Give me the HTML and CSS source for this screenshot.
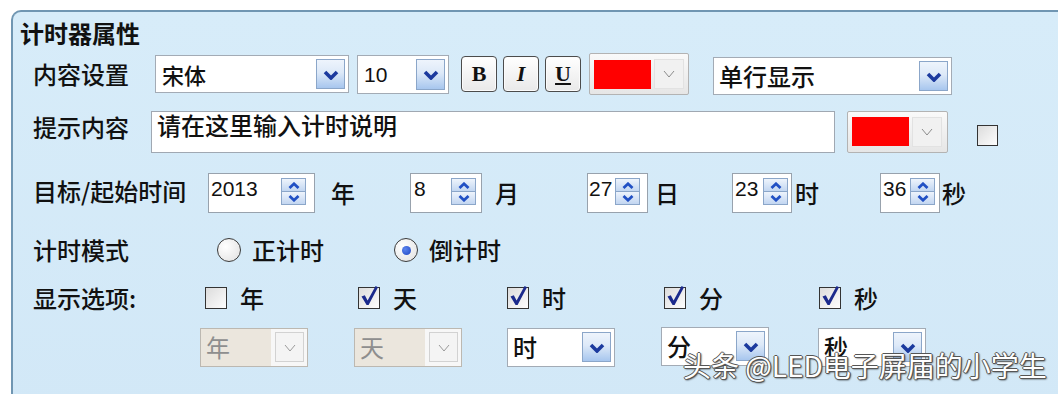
FILE: index.html
```html
<!DOCTYPE html>
<html lang="zh-CN">
<head>
<meta charset="utf-8">
<title>计时器属性</title>
<link rel="stylesheet" href="styles.css">
</head>
<body>
<div class="group">
  <div class="title">计时器属性</div>

  <div class="row r1">
    <span class="label w-r1">内容设置</span>
    <div class="combo c-font"><span class="val">宋体</span><span class="dd"><svg width="16" height="10" viewBox="0 0 16 10"><polyline points="2,2 8,8 14,2" fill="none" stroke="#1c3a9e" stroke-width="3.6"/></svg></span></div>
    <div class="combo c-size"><span class="val num">10</span><span class="dd"><svg width="16" height="10" viewBox="0 0 16 10"><polyline points="2,2 8,8 14,2" fill="none" stroke="#1c3a9e" stroke-width="3.6"/></svg></span></div>
    <span class="fmt f-b">B</span>
    <span class="fmt f-i">I</span>
    <span class="fmt f-u">U</span>
    <div class="color c1"><span class="swatch"></span><span class="cbtn"><svg width="12" height="8" viewBox="0 0 12 8"><polyline points="1,1 6,7 11,1" fill="none" stroke="#8c8c8c" stroke-width="1"/></svg></span></div>
    <div class="combo c-mode"><span class="val">单行显示</span><span class="dd"><svg width="16" height="10" viewBox="0 0 16 10"><polyline points="2,2 8,8 14,2" fill="none" stroke="#1c3a9e" stroke-width="3.6"/></svg></span></div>
  </div>

  <div class="row r2">
    <span class="label w-r2 up">提示内容</span>
    <div class="input">请在这里输入计时说明</div>
    <div class="color c2"><span class="swatch"></span><span class="cbtn"><svg width="12" height="8" viewBox="0 0 12 8"><polyline points="1,1 6,7 11,1" fill="none" stroke="#8c8c8c" stroke-width="1"/></svg></span></div>
    <span class="cb cb-r2"></span>
  </div>

  <div class="row r3">
    <span class="label w-r3 up2">目标/起始时间</span>
    <div class="spin s-year"><span class="v">2013</span><span class="sb"><span><svg width="12" height="7" viewBox="0 0 12 7"><polyline points="1.5,6 6,1.8 10.5,6" fill="none" stroke="#2150c4" stroke-width="2.8"/></svg></span><span><svg width="12" height="7" viewBox="0 0 12 7"><polyline points="1.5,1 6,5.2 10.5,1" fill="none" stroke="#2150c4" stroke-width="2.8"/></svg></span></span></div>
    <span class="unit u-year">年</span>
    <div class="spin s-mon"><span class="v">8</span><span class="sb"><span><svg width="12" height="7" viewBox="0 0 12 7"><polyline points="1.5,6 6,1.8 10.5,6" fill="none" stroke="#2150c4" stroke-width="2.8"/></svg></span><span><svg width="12" height="7" viewBox="0 0 12 7"><polyline points="1.5,1 6,5.2 10.5,1" fill="none" stroke="#2150c4" stroke-width="2.8"/></svg></span></span></div>
    <span class="unit u-mon">月</span>
    <div class="spin s-day"><span class="v">27</span><span class="sb"><span><svg width="12" height="7" viewBox="0 0 12 7"><polyline points="1.5,6 6,1.8 10.5,6" fill="none" stroke="#2150c4" stroke-width="2.8"/></svg></span><span><svg width="12" height="7" viewBox="0 0 12 7"><polyline points="1.5,1 6,5.2 10.5,1" fill="none" stroke="#2150c4" stroke-width="2.8"/></svg></span></span></div>
    <span class="unit u-day">日</span>
    <div class="spin s-hour"><span class="v">23</span><span class="sb"><span><svg width="12" height="7" viewBox="0 0 12 7"><polyline points="1.5,6 6,1.8 10.5,6" fill="none" stroke="#2150c4" stroke-width="2.8"/></svg></span><span><svg width="12" height="7" viewBox="0 0 12 7"><polyline points="1.5,1 6,5.2 10.5,1" fill="none" stroke="#2150c4" stroke-width="2.8"/></svg></span></span></div>
    <span class="unit u-hour">时</span>
    <div class="spin s-sec"><span class="v">36</span><span class="sb"><span><svg width="12" height="7" viewBox="0 0 12 7"><polyline points="1.5,6 6,1.8 10.5,6" fill="none" stroke="#2150c4" stroke-width="2.8"/></svg></span><span><svg width="12" height="7" viewBox="0 0 12 7"><polyline points="1.5,1 6,5.2 10.5,1" fill="none" stroke="#2150c4" stroke-width="2.8"/></svg></span></span></div>
    <span class="unit u-sec">秒</span>
  </div>

  <div class="row r4">
    <span class="label w-r4">计时模式</span>
    <span class="opt o1"><span class="radio"></span><span class="otext">正计时</span></span>
    <span class="opt o2"><span class="radio on"></span><span class="otext">倒计时</span></span>
  </div>

  <div class="row r5">
    <span class="label w-r5">显示选项:</span>
    <div class="cols">
      <span class="chk k1"><span class="cb"></span><span class="ktext">年</span></span>
      <span class="chk k2"><span class="cb on"><svg width="22" height="22" viewBox="0 0 22 22"><path d="M3.5 10.5 L6.8 9.3 L9.6 14.6 L17.6 0 L20 1.2 L10.6 19 L8.6 19 Z" fill="#1b2a8c"/></svg></span><span class="ktext">天</span></span>
      <span class="chk k3"><span class="cb on"><svg width="22" height="22" viewBox="0 0 22 22"><path d="M3.5 10.5 L6.8 9.3 L9.6 14.6 L17.6 0 L20 1.2 L10.6 19 L8.6 19 Z" fill="#1b2a8c"/></svg></span><span class="ktext">时</span></span>
      <span class="chk k4"><span class="cb on"><svg width="22" height="22" viewBox="0 0 22 22"><path d="M3.5 10.5 L6.8 9.3 L9.6 14.6 L17.6 0 L20 1.2 L10.6 19 L8.6 19 Z" fill="#1b2a8c"/></svg></span><span class="ktext">分</span></span>
      <span class="chk k5"><span class="cb on"><svg width="22" height="22" viewBox="0 0 22 22"><path d="M3.5 10.5 L6.8 9.3 L9.6 14.6 L17.6 0 L20 1.2 L10.6 19 L8.6 19 Z" fill="#1b2a8c"/></svg></span><span class="ktext">秒</span></span>
    </div>
  </div>

  <div class="row r6">
    <div class="cols">
      <div class="combo small dis q1"><span class="val">年</span><span class="dd"><svg width="12" height="8" viewBox="0 0 12 8"><polyline points="1,1 6,7 11,1" fill="none" stroke="#9a9a9a" stroke-width="1"/></svg></span></div>
      <div class="combo small dis q2"><span class="val">天</span><span class="dd"><svg width="12" height="8" viewBox="0 0 12 8"><polyline points="1,1 6,7 11,1" fill="none" stroke="#9a9a9a" stroke-width="1"/></svg></span></div>
      <div class="combo small q3"><span class="val">时</span><span class="dd"><svg width="16" height="10" viewBox="0 0 16 10"><polyline points="2,2 8,8 14,2" fill="none" stroke="#1c3a9e" stroke-width="3.6"/></svg></span></div>
      <div class="combo small q4"><span class="val">分</span><span class="dd"><svg width="16" height="10" viewBox="0 0 16 10"><polyline points="2,2 8,8 14,2" fill="none" stroke="#1c3a9e" stroke-width="3.6"/></svg></span></div>
      <div class="combo small q5"><span class="val">秒</span><span class="dd"><svg width="16" height="10" viewBox="0 0 16 10"><polyline points="2,2 8,8 14,2" fill="none" stroke="#1c3a9e" stroke-width="3.6"/></svg></span></div>
    </div>
  </div>
</div>
<div class="wm">头条 @LED电子屏届的小学生</div>
</body>
</html>
```

FILE: styles.css
```css
html, body {
  margin: 0;
  padding: 0;
}
body {
  width: 1058px;
  height: 394px;
  overflow: hidden;
  position: relative;
  background: #ffffff;
  font-family: "Noto Sans CJK SC", "Liberation Sans", sans-serif;
  font-weight: 500;
  color: #111;
}

.group {
  margin: 10px 0 0 11px;
  height: 400px;
  box-sizing: border-box;
  border: 2px solid #7096b2;
  border-right: 0;
  border-bottom: 0;
  border-radius: 10px 0 0 0;
  background: linear-gradient(#d7ecf9, #d2e8f7);
}

.title {
  height: 35px;
  box-sizing: border-box;
  padding: 7px 0 0 7px;
  font-size: 24px;
  line-height: 28px;
  font-weight: 700;
  color: #111;
}

.row {
  display: flex;
  align-items: center;
  padding-left: 20px;
}
.r1 { margin-top: 6px; height: 42px; }
.r2 { margin-top: 15px; height: 43px; }
.r3 { margin-top: 20px; height: 40px; }
.r4 { margin-top: 22px; height: 30px; }
.r5 { margin-top: 20px; height: 26px; }
.r6 { margin-top: 16px; height: 40px; padding-left: 187px; }

.label {
  flex: none;
  font-size: 24px;
  line-height: 24px;
  white-space: nowrap;
}
.label.up { margin-bottom: 10px; }
.label.up2 { margin-bottom: 4px; }
.w-r1 { width: 122px; }
.w-r2 { width: 118px; }
.w-r3 { width: 175px; }
.w-r4 { width: 184px; }
.w-r5 { width: 167px; }

/* combo boxes */
.combo {
  flex: none;
  display: flex;
  align-items: center;
  justify-content: space-between;
  box-sizing: border-box;
  background: #fff;
  border: 1px solid #a3abb5;
  padding: 0 3px 0 6px;
  font-size: 22px;
  line-height: 24px;
}
.combo .val { white-space: nowrap; }
.combo .num {
  font-family: "Liberation Sans", sans-serif;
  font-weight: 400;
  font-size: 21px;
  line-height: 21px;
}
.dd {
  flex: none;
  width: 29px;
  height: 30px;
  box-sizing: border-box;
  border: 1px solid #8ba6c9;
  background: linear-gradient(#eef4fc 0%, #dde9f8 45%, #a7c6ee 100%);
  display: flex;
  align-items: center;
  justify-content: center;
}
.dd svg { margin-top: 2px; }

.c-font { width: 194px; height: 38px; }
.c-size { width: 92px; height: 39px; margin-left: 8px; }
.c-size .dd { height: 31px; }
.c-mode { width: 239px; height: 38px; margin-left: 24px; margin-top: 4px; font-size: 24px; padding-left: 5px; }

/* format buttons */
.fmt {
  flex: none;
  width: 36px;
  height: 36px;
  box-sizing: border-box;
  border: 1px solid #4c4c4c;
  border-radius: 4px;
  background: linear-gradient(#ffffff, #e9e9e9);
  box-shadow: inset 0 0 0 1px #fbfbfb;
  display: flex;
  align-items: center;
  justify-content: center;
  font-family: "Liberation Serif", serif;
  font-weight: 700;
  font-size: 22px;
  line-height: 22px;
  color: #111;
}
.f-b { margin-left: 12px; }
.f-i { margin-left: 6px; font-style: italic; }
.f-u { margin-left: 6px; text-decoration: underline; text-decoration-thickness: 2px; text-underline-offset: 2px; }

/* colour pickers */
.color {
  flex: none;
  width: 100px;
  height: 42px;
  box-sizing: border-box;
  border: 1px solid #b3b3b3;
  border-radius: 2px;
  background: linear-gradient(#fafafa, #e6e6e6);
  display: flex;
  align-items: center;
  padding-left: 4px;
}
.c1 { margin-left: 8px; }
.c2 { margin-left: 12px; width: 101px; }
.swatch {
  flex: none;
  width: 57px;
  height: 29px;
  background: #ff0000;
}
.cbtn {
  flex: none;
  width: 30px;
  height: 30px;
  margin-left: 3px;
  box-sizing: border-box;
  border: 1px solid #e2e2e2;
  background: #f1f1f1;
  display: flex;
  align-items: center;
  justify-content: center;
}

/* text input */
.input {
  flex: none;
  width: 684px;
  height: 42px;
  box-sizing: border-box;
  border: 1px solid #a0a8b2;
  background: #fff;
  padding: 1px 0 0 5px;
  font-size: 24px;
  line-height: 24px;
}

/* checkbox */
.cb {
  flex: none;
  position: relative;
  width: 22px;
  height: 22px;
  box-sizing: border-box;
  border: 1px solid #333;
  background: linear-gradient(135deg, #dcdcdc, #fdfdfd);
}
.cb svg {
  position: absolute;
  left: -1px;
  top: -2px;
  overflow: visible;
}
.cb-r2 { width: 21px; height: 21px; margin-left: 29px; margin-top: 8px; }

/* spinners */
.spin {
  flex: none;
  display: flex;
  justify-content: space-between;
  align-items: flex-start;
  box-sizing: border-box;
  height: 40px;
  background: #fff;
  border: 1px solid #98a2ad;
  padding: 4px 5px 0 2px;
  font-family: "Liberation Sans", sans-serif;
  font-weight: 400;
  font-size: 21px;
  line-height: 21px;
}
.sb {
  flex: none;
  width: 25px;
  height: 27px;
  box-sizing: border-box;
  border: 1px solid #8ba6c9;
  display: flex;
  flex-direction: column;
}
.sb > span {
  flex: 1;
  display: flex;
  align-items: center;
  justify-content: center;
  background: linear-gradient(#eef4fc, #c2d6f1);
}
.sb > span + span { border-top: 1px solid #8ba6c9; }
.s-year { width: 107px; padding-right: 8px; }
.s-mon { width: 72px; padding-left: 3px; }
.s-day { width: 61px; padding-left: 1px; padding-right: 7px; }
.s-hour { width: 60px; padding-right: 3px; }
.s-sec { width: 60px; padding-right: 4px; }

.unit {
  flex: none;
  box-sizing: border-box;
  font-size: 24px;
  line-height: 24px;
}
.u-year { width: 95px; padding-left: 16px; }
.u-mon { width: 105px; padding-left: 13px; }
.u-day { width: 84px; padding-left: 7px; }
.u-hour { width: 88px; padding-left: 3px; }
.u-sec { padding-left: 2px; }

/* radios */
.opt {
  flex: none;
  display: flex;
  align-items: center;
}
.o1 { width: 177px; }
.radio {
  flex: none;
  width: 24px;
  height: 24px;
  box-sizing: border-box;
  border-radius: 50%;
  border: 1px solid #3a3a3a;
  background: radial-gradient(circle at 35% 35%, #ffffff, #e0e0e0);
  display: flex;
  align-items: center;
  justify-content: center;
}
.radio.on::after {
  content: "";
  width: 9px;
  height: 9px;
  border-radius: 50%;
  background: radial-gradient(circle at 35% 35%, #5a84ee, #1f46c2);
}
.otext {
  margin-left: 11px;
  font-size: 24px;
  line-height: 24px;
}

/* columns for display options */
.cols {
  display: grid;
  grid-template-columns: 154px 153px 154px 157px 120px;
  align-items: center;
}
.chk {
  display: flex;
  align-items: center;
}
.ktext {
  margin-left: 13px;
  font-size: 24px;
  line-height: 24px;
}
.k1 { padding-left: 5px; }
.k2 { padding-left: 4px; }
.k3 { padding-left: 0; }
.k4 { padding-left: 3px; }
.k5 { padding-left: 1px; }

.combo.small {
  height: 39px;
  width: 108px;
  font-size: 24px;
  padding-left: 5px;
}
.q1, .q2 { width: 109px; padding-left: 6px; }
.q4 { margin-top: -2px; }
.q5 { width: 109px; }
.combo.dis {
  color: #8e8e8e;
  font-weight: 400;
  border-color: #bcb8b1;
  background: linear-gradient(to right, #ebe6dd calc(100% - 36px), #f7f7f7 calc(100% - 36px));
}
.combo.dis .dd {
  background: #f4f4f4;
  border-color: #d2d2d2;
}

/* watermark */
.wm {
  position: absolute;
  left: 683px;
  top: 349px;
  font-size: 28px;
  font-weight: 400;
  line-height: 32px;
  color: #ffffff;
  white-space: nowrap;
  text-shadow: -1px 0 #555, 1px 0 #555, 0 -1px #555, 0 1px #555, 1px 1px 2px #000;
}
```
